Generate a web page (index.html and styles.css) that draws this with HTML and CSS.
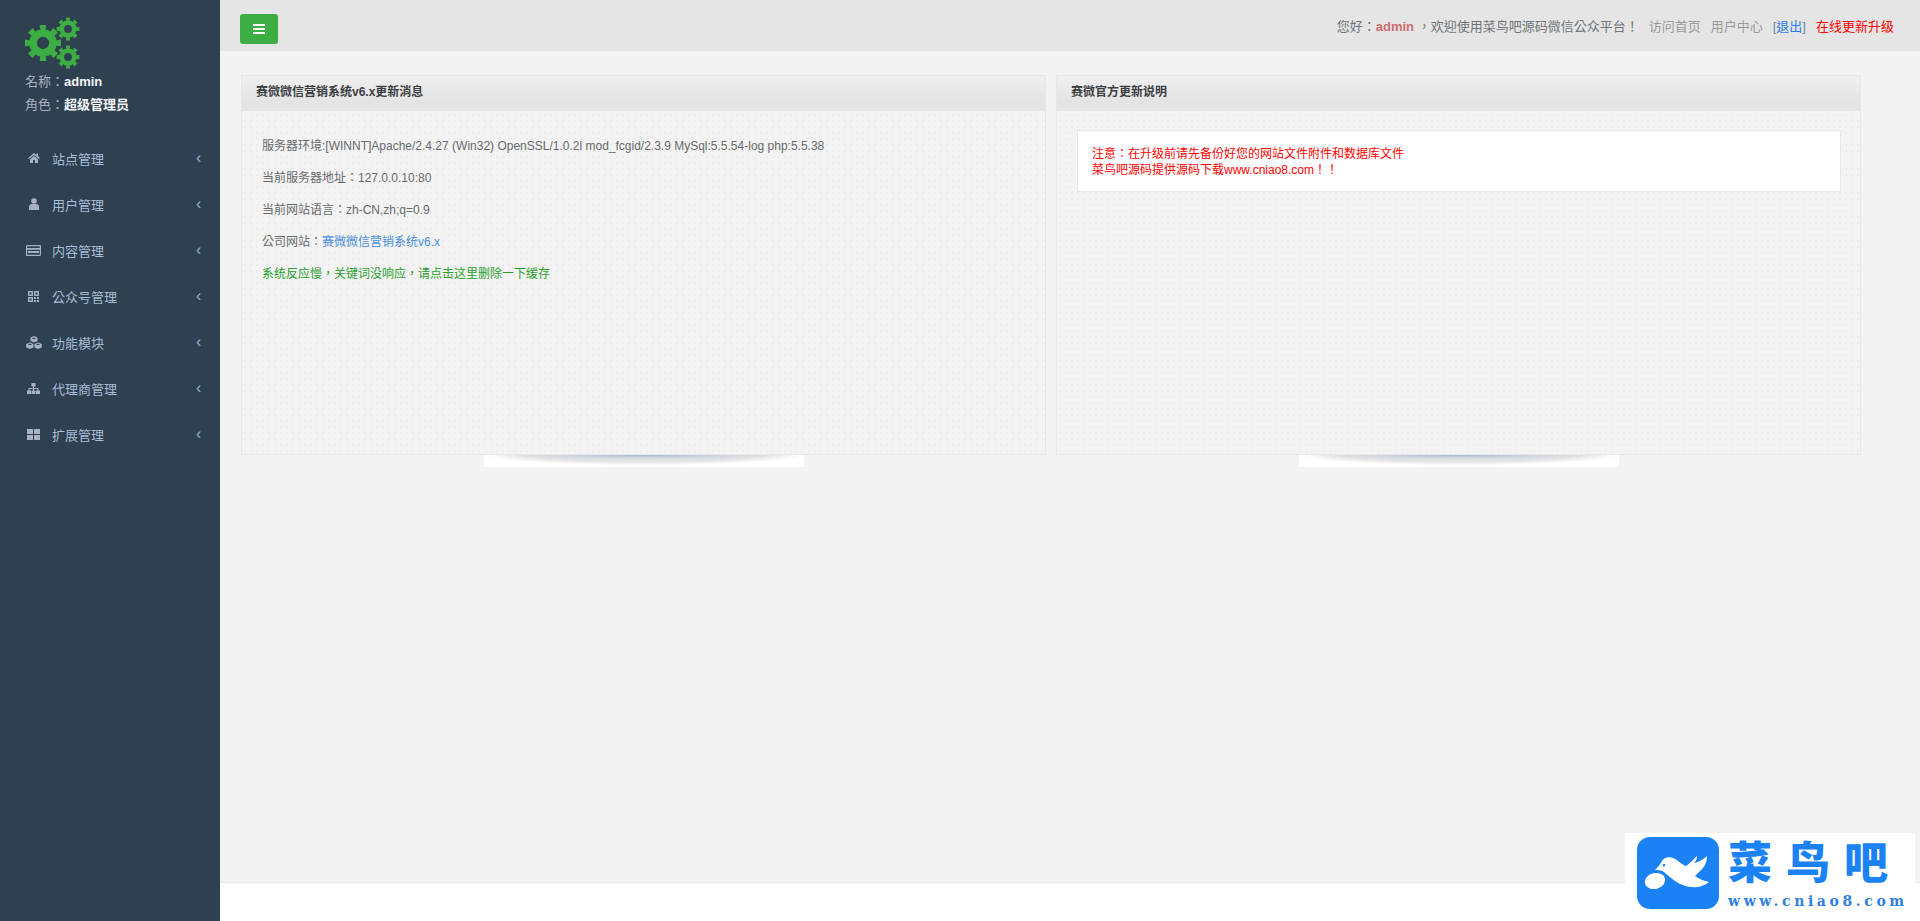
FILE: index.html
```html
<!DOCTYPE html>
<html>
<head>
<meta charset="utf-8">
<title>赛微微信营销系统</title>
<link rel="stylesheet" href="styles.css">
</head>
<body>
<svg class="defs" width="0" height="0" aria-hidden="true">
  <symbol id="gear" viewBox="-20 -20 40 40">
    <circle r="10.5" fill="none" stroke="#3cae43" stroke-width="8"/>
    <circle r="16" fill="none" stroke="#3cae43" stroke-width="6" pathLength="16" stroke-dasharray="1 1" stroke-dashoffset="0.5"/>
  </symbol>
</svg>
<div class="layout">
  <aside class="sidebar">
    <div class="profile">
      <svg class="gears" width="64" height="54" viewBox="0 0 64 54">
        <use href="#gear" x="-1" y="7" width="38" height="38"/>
        <use href="#gear" x="31" y="0" width="24" height="24"/>
        <use href="#gear" x="31" y="28" width="24" height="24"/>
      </svg>
      <p class="who">名称：<b>admin</b></p>
      <p class="who">角色：<b>超级管理员</b></p>
    </div>
    <nav class="menu">
      <a class="item"><span class="ico"><svg width="12" height="10" viewBox="0 0 12 10"><path d="M6 0 0 5l1 1 5-4 5 4 1-1-2-1.700V.5H8.500v1.500zM2 6.200 6 3l4 3.200V10H7V7H5v3H2z"/></svg></span><span class="label">站点管理</span><span class="chev">‹</span></a>
      <a class="item"><span class="ico"><svg width="12" height="12" viewBox="0 0 12 12"><circle cx="6" cy="3" r="2.800"/><path d="M1 12V8.500C1 7 2.500 6 4 6h4c1.500 0 3 1 3 2.500V12z"/></svg></span><span class="label">用户管理</span><span class="chev">‹</span></a>
      <a class="item"><span class="ico"><svg width="15" height="11" viewBox="0 0 15 11"><path fill-rule="evenodd" d="M1 0h13a1 1 0 0 1 1 1v9a1 1 0 0 1-1 1H1a1 1 0 0 1-1-1V1a1 1 0 0 1 1-1zm.200 1.200v1.800h12.600V1.200zm0 3.600v5h12.600v-5z"/><path d="M2 6h11v2H2z"/></svg></span><span class="label">内容管理</span><span class="chev">‹</span></a>
      <a class="item"><span class="ico"><svg width="11" height="11" viewBox="0 0 11 11"><path fill-rule="evenodd" d="M0 0h5v5H0zm1.500 1.500v2h2v-2zM6 0h5v5H6zm1.500 1.500v2h2v-2zM0 6h5v5H0zm1.500 1.500v2h2v-2zM6 6h2v2H6zm3 0h2v2H9zM6 9h2v2H6zm3 0h2v2H9z"/></svg></span><span class="label">公众号管理</span><span class="chev">‹</span></a>
      <a class="item"><span class="ico"><svg width="16" height="13" viewBox="0 0 16 13"><path fill-rule="evenodd" d="M8 0l3.500 1.500v3.600L8 6.600 4.500 5.100V1.500zM6 2.300 8 3.200l2-.9-2-.8zM4 6.500l3.500 1.500v3.500L4 13 .2 11.500V8zM2 8.400l2 .9 2-.9-2-.8zM12 6.500 15.800 8v3.500L12 13l-3.500-1.500V8zM10 8.400l2 .9 2-.9-2-.8z"/></svg></span><span class="label">功能模块</span><span class="chev">‹</span></a>
      <a class="item"><span class="ico"><svg width="13" height="11" viewBox="0 0 13 11"><path d="M4.500 0h4v3.500H7V5h4.500v2.500H13V11H9V7.500h1.500V6H7v1.500h1.500V11h-4V7.500H6V6H2.500v1.500H4V11H0V7.500h1.500V5H6V3.500H4.500z"/></svg></span><span class="label">代理商管理</span><span class="chev">‹</span></a>
      <a class="item"><span class="ico"><svg width="13" height="11" viewBox="0 0 13 11"><path d="M0 0h6v5H0zM7 0h6v5H7zM0 6h6v5H0zM7 6h6v5H7z"/></svg></span><span class="label">扩展管理</span><span class="chev">‹</span></a>
    </nav>
  </aside>
  <div class="main">
    <header class="topbar">
      <button class="toggle" type="button" aria-label="菜单"><svg width="12" height="10" viewBox="0 0 12 10"><path d="M0 0h12v2H0zM0 4h12v2H0zM0 8h12v2H0z"/></svg></button>
      <div class="topinfo">
        <span>您好：<b class="uname">admin</b> ，欢迎使用菜鸟吧源码微信公众平台！</span>
        <a class="toplink">访问首页</a>
        <a class="toplink">用户中心</a>
        <a class="logout">[<span class="blue">退出</span>]</a>
        <a class="upgrade">在线更新升级</a>
      </div>
    </header>
    <section class="content">
      <article class="panel">
        <h5 class="ptitle">赛微微信营销系统v6.x更新消息</h5>
        <div class="pbody rows">
          <p>服务器环境:[WINNT]Apache/2.4.27 (Win32) OpenSSL/1.0.2l mod_fcgid/2.3.9 MySql:5.5.54-log php:5.5.38</p>
          <p>当前服务器地址：127.0.0.10:80</p>
          <p>当前网站语言：zh-CN,zh;q=0.9</p>
          <p>公司网站：<a class="link">赛微微信营销系统v6.x</a></p>
          <p class="green">系统反应慢，关键词没响应，请点击这里删除一下缓存</p>
        </div>
        <div class="shadow"></div>
      </article>
      <article class="panel">
        <h5 class="ptitle">赛微官方更新说明</h5>
        <div class="pbody">
          <div class="notice">注意：在升级前请先备份好您的网站文件附件和数据库文件<br>菜鸟吧源码提供源码下载www.cniao8.com！！</div>
        </div>
        <div class="shadow"></div>
      </article>
    </section>
    <footer class="footer"></footer>
  </div>
</div>
<div class="brand">
  <svg class="brandicon" width="82" height="72" viewBox="0 0 82 72">
    <rect width="82" height="72" rx="13" fill="#1a82f5"/>
    <path fill="#fff" d="M18 33C22 29 24 26 25 24C27 20 33 19 38 22C42 24 45 28 49 29C52 27 56 23 60 19C60 22 59 24 57 26C62 25 67 22 70 19C70 25 68 30 63 34C61 36 59 38 58 39C62 42 67 44 72 45C68 48 62 51 56 50C50 50 44 48 38 44C34 41 30 38 27 35C24 33 21 33 18 33Z"/>
    <ellipse cx="18" cy="44" rx="11" ry="8.500" fill="#fff" stroke="#1a82f5" stroke-width="1.200" transform="rotate(-15 18 44)"/>
    <circle cx="27" cy="28" r="1.300" fill="#1a82f5"/>
  </svg>
  <div class="brandtext">
    <div class="brandname">菜鸟吧</div>
    <div class="brandurl">www.cniao8.com</div>
  </div>
</div>
</body>
</html>
```
FILE: styles.css
```css
* { box-sizing: border-box; }
html, body { margin: 0; height: 100%; overflow: hidden; }
body {
  font-family: "Liberation Sans", "Noto Sans CJK TC", sans-serif;
  font-size: 13px;
  color: #676a6c;
  background: #f3f3f3;
}
p, h5 { margin: 0; }
.defs { position: absolute; }
.layout { display: flex; height: 921px; }

.sidebar { width: 220px; flex: none; background: #2f4050; }
.profile { padding: 17px 0 0 25px; height: 135px; }
.gears { display: block; margin-bottom: -1.500px; overflow: visible; }
.who { color: #a7b1c2; line-height: 23px; height: 23px; }
.who b { color: #f3f6fb; font-weight: 700; }
.menu { display: flex; flex-direction: column; }
.item {
  display: flex;
  align-items: center;
  height: 46px;
  padding-left: 25px;
  color: #a7b1c2;
}
.ico { width: 27px; flex: none; display: flex; justify-content: center; padding-right: 10px; }
.ico svg { fill: #a7b1c2; display: block; flex: none; }
.label { flex: 1; color: #a9bdd6; }
.chev { width: 24px; flex: none; font-size: 16px; line-height: 1; color: #8fb0d8; }

.main { flex: 1; display: flex; flex-direction: column; min-width: 0; }
.topbar {
  height: 51px;
  flex: none;
  background: #e5e5e5;
  display: flex;
  align-items: center;
  justify-content: space-between;
  padding: 0 26px 0 20px;
}
.toggle {
  width: 38px;
  height: 30px;
  margin-top: 7px;
  border: 0;
  border-radius: 3px;
  background: #3cae43;
  display: flex;
  align-items: center;
  justify-content: center;
  padding: 0;
}
.toggle svg { fill: #fff; display: block; }
.topinfo { display: flex; align-items: center; gap: 10px; color: #6f7478; margin-top: -1px; }
.uname { color: #cc6f6f; }
.toplink { color: #999; }
.logout { color: #6f86a8; }
.blue { color: #2a7de1; }
.upgrade { color: #f00; }

.content {
  flex: 1;
  display: flex;
  gap: 10px;
  padding: 24px 59px 0 21px;
  align-items: flex-start;
}
.panel {
  position: relative;
  width: 805px;
  height: 380px;
  border: 1px solid #e7e7e7;
  background-color: #f3f3f3;
  background-image: radial-gradient(#ececec 0.7px, transparent 0.8px);
  background-size: 6px 6px;
}
.ptitle {
  height: 35px;
  padding: 0 14px;
  font-size: 12px;
  line-height: 33px;
  font-weight: 700;
  color: #3b3f44;
  background: linear-gradient(#f0f0f0, #e4e4e4 70%);
}
.pbody { padding: 19px 19px 0 20px; font-size: 12px; color: #676a6c; }
.rows { padding-top: 19px; }
.rows p { height: 32px; line-height: 32px; }
.link { color: #4a90d9; }
.green { color: #2ba02f; }
.notice {
  height: 62px;
  padding: 15px 14px 0;
  background: #fff;
  border: 1px solid #e7e7e7;
  line-height: 16px;
  color: #f00;
}
.shadow {
  position: absolute;
  left: 242px;
  top: 379px;
  width: 320px;
  height: 12px;
  background:
    radial-gradient(ellipse 150px 5px at 50% 0, #aeb9c9 0, #d5d9df 60%, transparent 100%),
    radial-gradient(ellipse 160px 10px at 50% 0, #e3e3e3 70%, transparent 100%),
    #fff;
}
.footer { height: 39px; flex: none; background: #fff; border-top: 1px solid #e7e7e7; }

.brand {
  position: absolute;
  left: 1625px;
  top: 833px;
  width: 290px;
  height: 88px;
  background: #fff;
  display: flex;
  padding: 4px 0 0 12px;
  gap: 9px;
}
.brandname {
  font-family: "Noto Sans CJK SC", sans-serif;
  font-size: 44px;
  line-height: 44px;
  margin-top: 1px;
  font-weight: 900;
  letter-spacing: 14px;
  color: #1a82f5;
  white-space: nowrap;
}
.brandurl {
  margin-top: 11px;
  font-family: "DejaVu Serif", serif;
  font-size: 14px;
  line-height: 16px;
  font-weight: 700;
  letter-spacing: 3.600px;
  color: #2f80e0;
  white-space: nowrap;
}
```
